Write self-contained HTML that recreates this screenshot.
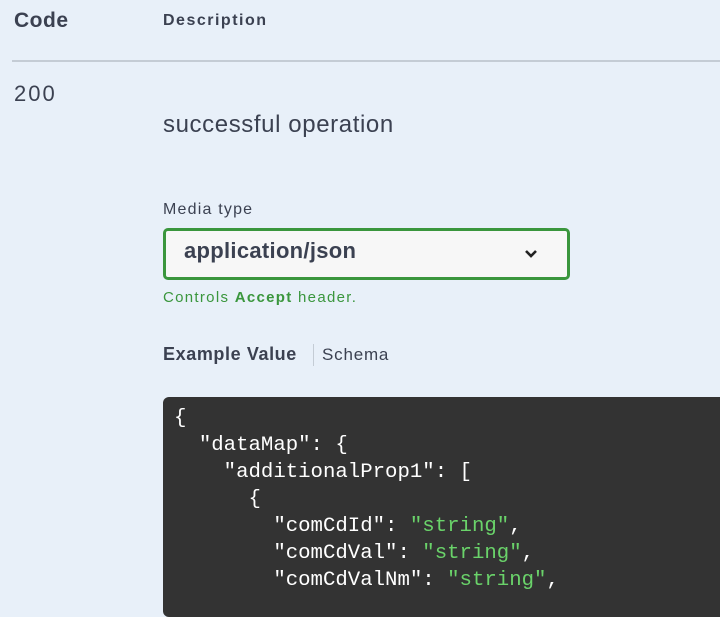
<!DOCTYPE html>
<html><head><meta charset="utf-8"><style>
html,body{margin:0;padding:0;}
body{width:720px;height:586px;overflow:hidden;background:#e8f0f9;font-family:"Liberation Sans",sans-serif;color:#3b4151;position:relative;}
.a{position:absolute;white-space:nowrap;}
.code{position:absolute;left:163px;top:397px;width:580px;height:220px;background:#333;border-radius:6px;font-family:"Liberation Mono",monospace;font-size:20.7px;line-height:27px;color:#fff;padding:8px 0 0 11px;white-space:pre;box-sizing:border-box;}
.s{color:#6ad36a;}
</style></head><body>
<div class="a" style="left:14px;top:9px;font-size:21px;font-weight:bold;letter-spacing:0.5px;">Code</div>
<div class="a" style="left:163px;top:12px;font-size:16px;font-weight:bold;letter-spacing:1.5px;">Description</div>
<div class="a" style="left:12px;top:60px;width:708px;height:2px;background:#c4ccd5;"></div>
<div class="a" style="left:14px;top:81px;font-size:22px;letter-spacing:2px;">200</div>
<div class="a" style="left:163px;top:111px;font-size:24px;letter-spacing:0.6px;">successful operation</div>
<div class="a" style="left:163px;top:201px;font-size:16px;letter-spacing:1.2px;">Media type</div>
<div class="a" style="left:163px;top:228px;width:407px;height:52px;box-sizing:border-box;border:3px solid #3a963d;border-radius:5px;background:#f7f7f7;"></div>
<div class="a" style="left:184px;top:238px;font-size:22px;font-weight:bold;letter-spacing:0.3px;">application/json</div>
<svg class="a" style="left:523px;top:248px" width="16" height="12" viewBox="0 0 16 12"><path d="M3 3l5 5 5-5" fill="none" stroke="#222" stroke-width="2.6"/></svg>
<div class="a" style="left:163px;top:289px;font-size:15px;color:#3a963d;letter-spacing:1.3px;">Controls <b>Accept</b> header.</div>
<div class="a" style="left:163px;top:344px;font-size:18px;letter-spacing:0.6px;"><b>Example Value</b></div>
<div class="a" style="left:313px;top:344px;width:1px;height:22px;background:#c4ccd5;"></div>
<div class="a" style="left:322px;top:345px;font-size:17px;letter-spacing:0.8px;">Schema</div>
<div class="code">{
  "dataMap": {
    "additionalProp1": [
      {
        "comCdId": <span class="s">"string"</span>,
        "comCdVal": <span class="s">"string"</span>,
        "comCdValNm": <span class="s">"string"</span>,</div>
</body></html>
